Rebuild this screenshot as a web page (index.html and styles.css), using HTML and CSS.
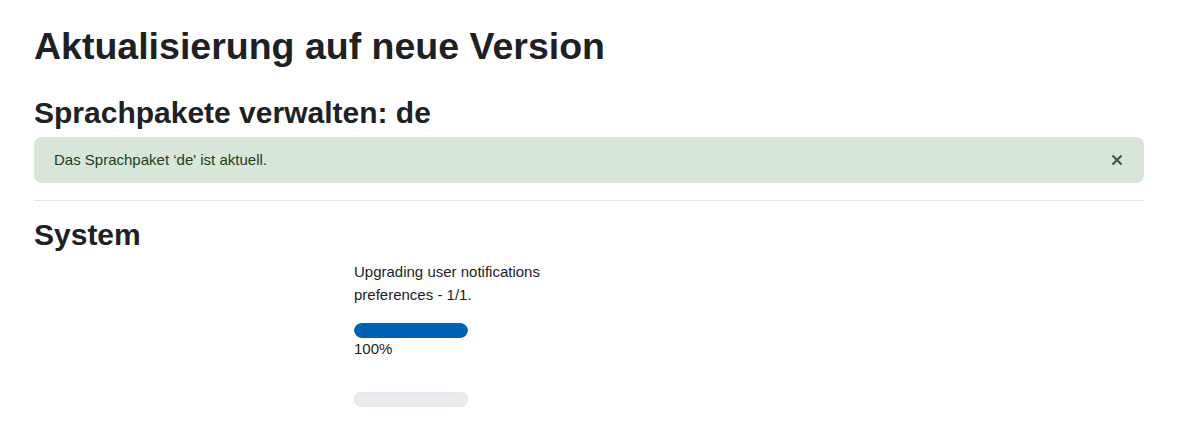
FILE: index.html
```html
<!DOCTYPE html>
<html lang="de">
<head>
<meta charset="utf-8">
<title>Aktualisierung auf neue Version</title>
<link rel="stylesheet" href="styles.css">
</head>
<body>
<main class="page">
  <h1 class="title">Aktualisierung auf neue Version</h1>
  <h2 class="section">Sprachpakete verwalten: de</h2>
  <div class="alert">
    <span class="alert-text">Das Sprachpaket ‘de' ist aktuell.</span>
    <button class="close" aria-label="Schließen">
      <svg width="12" height="12" viewBox="0 0 12 12"><path d="M1.5 1.5 L10.5 10.5 M10.5 1.5 L1.5 10.5" stroke="#4f564f" stroke-width="2.4" stroke-linecap="butt"/></svg>
    </button>
  </div>
  <hr class="divider">
  <h2 class="section system">System</h2>
  <div class="progress-area">
    <div class="progress-msg">Upgrading user notifications preferences - 1/1.</div>
    <div class="bar"><div class="bar-fill"></div></div>
    <div class="percent">100%</div>
    <div class="bar bar-empty"></div>
  </div>
</main>
</body>
</html>
```
FILE: styles.css
```css
html, body {
  margin: 0;
  padding: 0;
  background: #fff;
}
body {
  font-family: "Liberation Sans", Arial, sans-serif;
  font-size: 15px;
  line-height: 1.5;
  color: #1d2125;
}
.page {
  width: 1110px;
  padding: 24px 0 0 34px;
}
.title {
  margin: 0;
  font-size: 37.5px;
  line-height: 45px;
  font-weight: 700;
}
.section {
  margin: 26px 0 6px;
  font-size: 30px;
  line-height: 36px;
  font-weight: 700;
}
.alert {
  display: flex;
  align-items: center;
  justify-content: space-between;
  background: #d7e6d8;
  color: #1c3f1a;
  border-radius: 8px;
  padding: 12px 20px;
  height: 22px;
  font-size: 15px;
  line-height: 22px;
}
.close {
  border: 0;
  background: transparent;
  padding: 0;
  margin-right: 1px;
  display: flex;
  align-items: center;
  cursor: pointer;
}
.divider {
  margin: 17px 0 0;
  border: 0;
  border-top: 1px solid #e3e4e5;
  height: 0;
}
.system {
  margin-top: 16px;
  margin-bottom: 0;
}
.progress-area {
  padding: 8px 0 0 320px;
}
.progress-msg {
  width: 210px;
  line-height: 22.5px;
}
.bar {
  width: 114px;
  height: 15px;
  border-radius: 8px;
  background: #e9ecef;
  overflow: hidden;
  margin-top: 17px;
}
.bar-fill {
  width: 100%;
  height: 100%;
  background: #0062b4;
  border-radius: 8px;
}
.percent {
  line-height: 22.5px;
  margin-top: 0;
}
.bar-empty {
  margin-top: 31px;
  box-shadow: inset 0 0 0 1px #e3e6ea;
}
```
